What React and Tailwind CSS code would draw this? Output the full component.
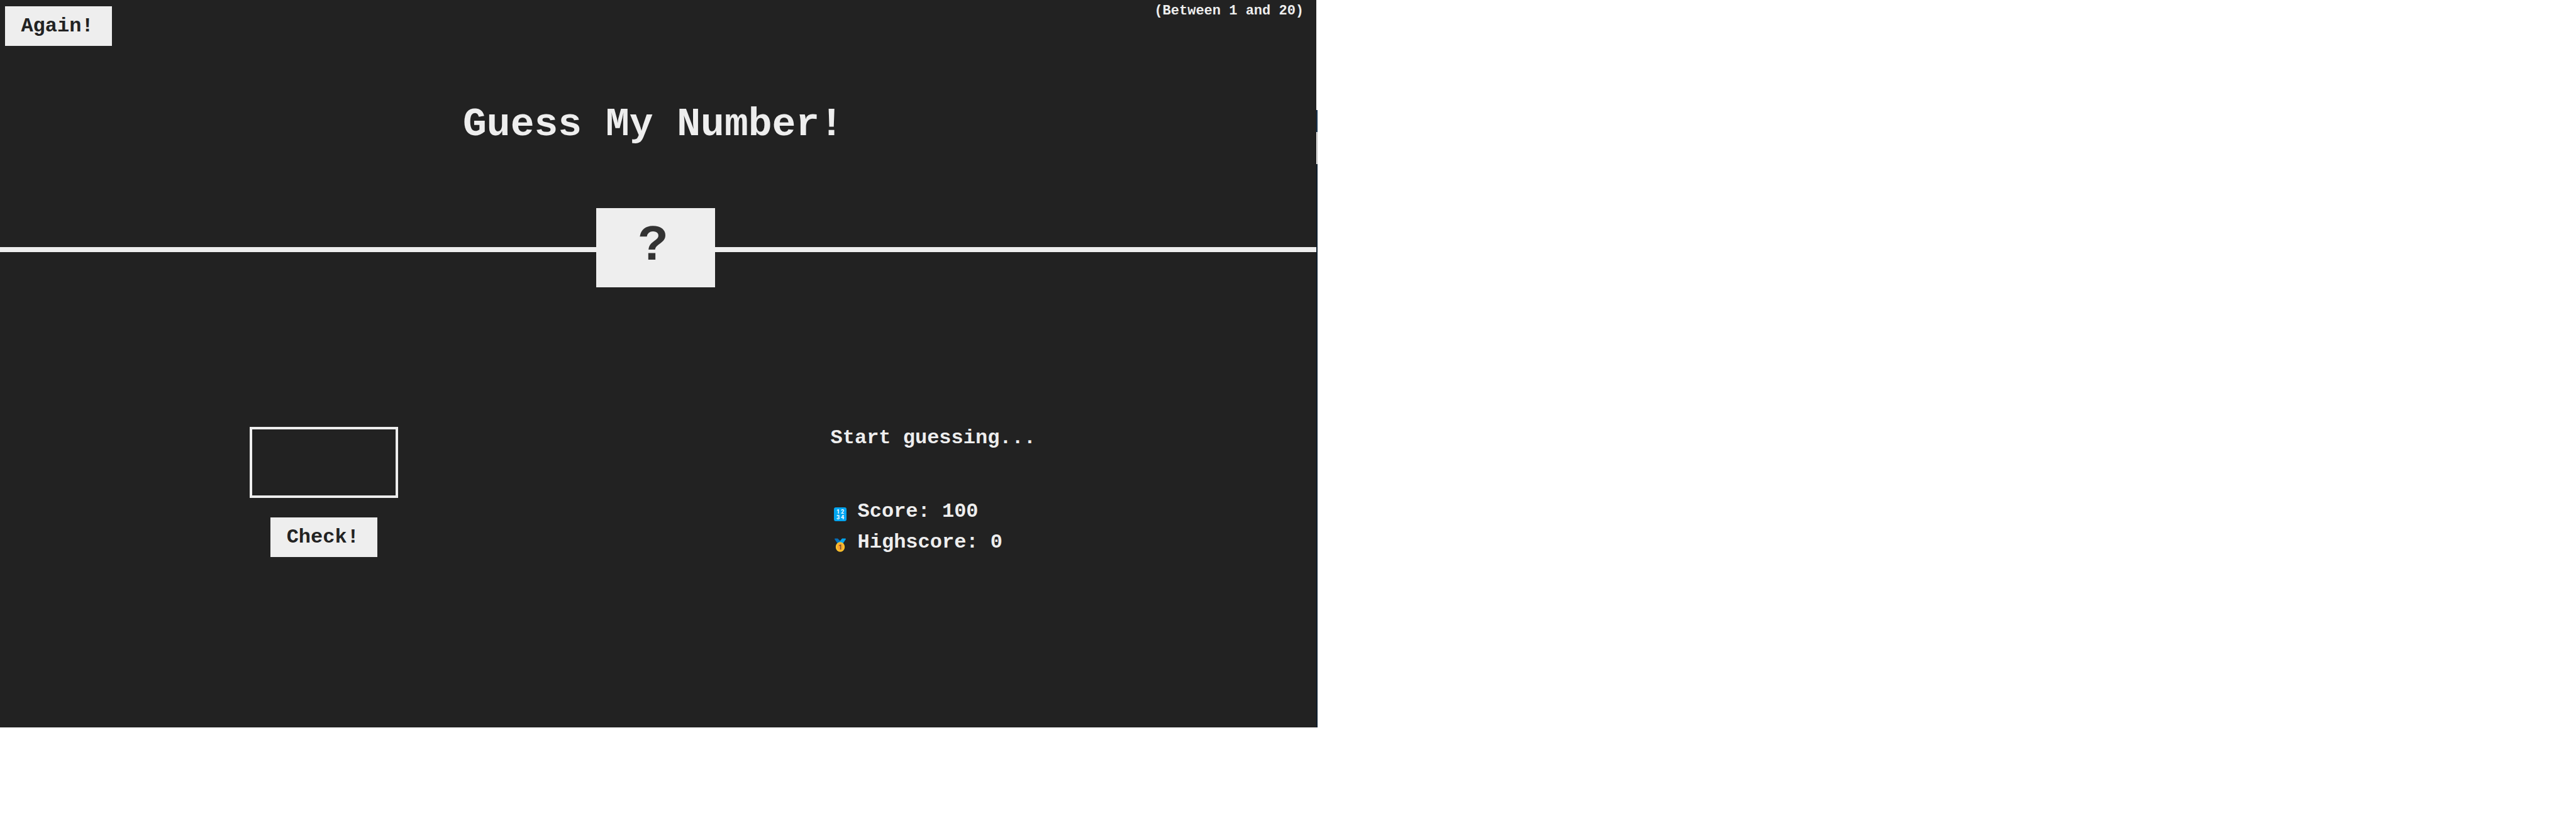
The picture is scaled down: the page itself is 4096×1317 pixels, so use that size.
import { useState } from "react";

function NumbersIcon() {
  return (
    <svg className="mt-2 h-[22px] w-5 shrink-0" viewBox="0 0 20 22" aria-hidden="true">
      <rect width="20" height="22" rx="3" fill="#03a5f0" />
      <g fill="#ffffff" fontFamily="Roboto, sans-serif" fontWeight="700" fontSize="9" textAnchor="middle">
        <text x="6.5" y="10">1</text>
        <text x="13.5" y="10">2</text>
        <text x="6.5" y="19">3</text>
        <text x="13.5" y="19">4</text>
      </g>
    </svg>
  );
}

function MedalIcon() {
  return (
    <svg className="mt-2 h-[22px] w-5 shrink-0" viewBox="0 0 20 22" aria-hidden="true">
      <path d="M1 1.5Q1 .5 2 .5H6L11.5 6 8 9H6Z" fill="#0670bb" />
      <path d="M19 1.5Q19 .5 18 .5H13L7.5 7 10 9H14Z" fill="#03a5f0" />
      <ellipse cx="10" cy="14" rx="7.2" ry="7.8" fill="#fdc32d" />
      <ellipse cx="10" cy="14" rx="5" ry="5.7" fill="#f9a72f" />
      <text x="10" y="17.5" fill="#6d4534" fontFamily="Roboto, sans-serif" fontWeight="700" fontSize="10" textAnchor="middle">
        1
      </text>
    </svg>
  );
}

const buttonClass =
  "h-[63px] w-[170px] cursor-pointer bg-[#eeeeee] pr-1 text-center text-[32px] leading-9 font-bold text-[#222222] hover:bg-[#cccccc]";

export default function App() {
  const [guess, setGuess] = useState("");

  return (
    <div className="flex min-h-screen items-start bg-white font-['Liberation_Mono',monospace] font-bold text-[#eeeeee]">
      <div className="min-h-[1157px] w-[51.1%] bg-[#222222]">
        <header>
          <div className="flex items-start justify-between pt-[10px] pr-[20px] pl-2">
            <button type="button" className={buttonClass}>Again!</button>
            <p className="text-[22px] leading-4">(Between 1 and 20)</p>
          </div>
          <h1 className="mt-[94px] pr-4 text-center text-[63px] leading-[64px] font-bold">Guess My Number!</h1>
          <div className="mt-[100px] grid items-center">
            <div className="col-start-1 row-start-1 mt-[6px] h-2 bg-[#eeeeee]" />
            <div className="col-start-1 row-start-1 mr-2 flex h-[126px] w-[189px] items-center justify-center justify-self-center bg-[#eeeeee] pr-2 pb-1 text-[80px] leading-none text-[#333333]">
              ?
            </div>
          </div>
        </header>
        <main className="mt-[222px] grid grid-cols-2">
          <section className="flex flex-col items-center pr-4">
            <input
              type="number"
              aria-label="Your guess"
              value={guess}
              onChange={(e) => setGuess(e.target.value)}
              className="h-[113px] w-[236px] appearance-none border-4 border-[#eeeeee] bg-transparent text-center text-[63px] outline-none"
            />
            <button type="button" className={`${buttonClass} mt-[31px]`}>Check!</button>
          </section>
          <section className="pl-[274px] text-[32px] leading-9">
            <p>Start guessing...</p>
            <p className="mt-[81px] flex items-center gap-[18px] pl-[5px]">
              <NumbersIcon />
              <span>Score: 100</span>
            </p>
            <p className="mt-[13px] flex items-center gap-[18px] pl-[5px]">
              <MedalIcon />
              <span>Highscore: 0</span>
            </p>
          </section>
        </main>
      </div>
      <div className="flex h-[1157px] w-[2px] flex-col pt-[175px]" aria-hidden="true">
        <div className="h-[35px] bg-[#17344f]" />
        <div className="h-[51px] border-r border-[#b5b5b5] bg-white" />
        <div className="flex-1 bg-[#10202f]" />
      </div>
    </div>
  );
}
